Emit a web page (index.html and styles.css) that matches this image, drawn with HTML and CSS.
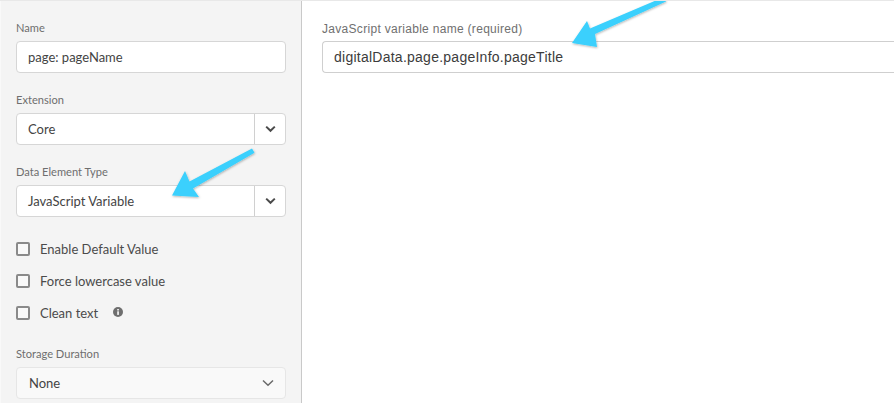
FILE: index.html
```html
<!DOCTYPE html>
<html lang="en">
<head>
<meta charset="utf-8">
<title>Data Element</title>
<link rel="stylesheet" href="styles.css">
</head>
<body>
<div class="page">
  <aside class="sidebar">
    <div class="field">
      <div class="label">Name</div>
      <div class="control"><span class="value">page: pageName</span></div>
    </div>
    <div class="field">
      <div class="label">Extension</div>
      <div class="control">
        <span class="value">Core</span>
        <span class="drop"><svg class="chev" width="11" height="8" viewBox="0 0 11 8"><path d="M1.2 1.6 5.5 5.8 9.8 1.6" fill="none" stroke="#4b4b4b" stroke-width="2"/></svg></span>
      </div>
    </div>
    <div class="field">
      <div class="label">Data Element Type</div>
      <div class="control">
        <span class="value">JavaScript Variable</span>
        <span class="drop"><svg class="chev" width="11" height="8" viewBox="0 0 11 8"><path d="M1.2 1.6 5.5 5.8 9.8 1.6" fill="none" stroke="#4b4b4b" stroke-width="2"/></svg></span>
      </div>
    </div>
    <div class="checks">
      <div class="check"><span class="box"></span><span>Enable Default Value</span></div>
      <div class="check"><span class="box"></span><span>Force lowercase value</span></div>
      <div class="check"><span class="box"></span><span>Clean text</span>
        <svg class="info" width="10" height="10" viewBox="0 0 10 10"><circle cx="5" cy="5" r="5" fill="#6e6e6e"/><rect x="4.2" y="4.3" width="1.7" height="3.6" fill="#f4f4f4"/><rect x="4.2" y="2" width="1.7" height="1.5" fill="#f4f4f4"/></svg>
      </div>
    </div>
    <div class="field">
      <div class="label">Storage Duration</div>
      <div class="control quiet">
        <span class="value">None</span>
        <svg class="chev-plain" width="12" height="8" viewBox="0 0 12 8"><path d="M1 1.5 6 6.3 11 1.5" fill="none" stroke="#6a6a6a" stroke-width="1.5"/></svg>
      </div>
    </div>
  </aside>
  <main class="main">
    <div class="label js">JavaScript variable name (required)</div>
    <div class="control js-input"><span class="value">digitalData.page.pageInfo.pageTitle</span></div>
  </main>
  <svg class="arrows" width="894" height="403" viewBox="0 0 894 403">
    <defs>
      <filter id="sh" x="-20%" y="-20%" width="140%" height="140%"><feDropShadow dx="0.5" dy="1" stdDeviation="1" flood-color="#000" flood-opacity="0.3"/></filter>
    </defs>
    <g filter="url(#sh)" fill="#3ad0fd">
      <path d="M252 148.500 254.500 152.800 193 188.500 199 197 172 195.500 185 171 189.500 181.500Z"/>
      <path d="M664 -3 666 1.500 595 34 597 47 572 43 587 21 590 28.500Z"/>
    </g>
  </svg>
</div>
</body>
</html>
```
FILE: styles.css
```css
* { box-sizing: border-box; }
html, body { margin: 0; padding: 0; }
body { background: #fff; overflow: hidden; }
.page {
  position: relative;
  display: flex;
  width: 894px;
  height: 403px;
  overflow: hidden;
  border-top: 1px solid #e8e8e8;
  font-family: Lato, "Open Sans", sans-serif;
  color: #4b4b4b;
}
.sidebar {
  flex: 0 0 302px;
  height: 402px;
  padding: 20px 15px 0 15px;
  background: #f4f4f4;
  border-right: 1px solid #c9c9c9;
  border-left: 1px solid #f9f9f9;
}
.field { margin-bottom: 20px; }
.label {
  font-size: 11.1px;
  line-height: 14px;
  height: 16px;
  margin-bottom: 4px;
  color: #6e6e6e;
}
.control {
  display: flex;
  align-items: center;
  height: 32px;
  background: #fff;
  border: 1px solid #d6d6d6;
  border-radius: 4px;
  font-size: 13px;
  color: #444;
}
.control .value { flex: 1; padding-left: 11px; }
.drop {
  flex: 0 0 31px;
  height: 100%;
  display: flex;
  align-items: center;
  justify-content: center;
  border-left: 1px solid #d0d0d0;
}
.checks {
  display: flex;
  flex-direction: column;
  gap: 10px;
  margin-top: 21px;
  margin-bottom: 23px;
}
.check {
  display: flex;
  align-items: center;
  height: 22px;
  font-size: 13px;
  color: #4b4b4b;
}
.box {
  width: 14px;
  height: 14px;
  margin-right: 10px;
  border: 2px solid #8a8a8a;
  border-radius: 2px;
  background: #f9f9f9;
}
.info { margin-left: 15px; margin-top: -2px; }
.quiet { background: #f9f9f9; border-color: #e6e6e6; padding-right: 11px; }
.quiet .value { padding-left: 12px; }
.main { flex: 1; padding: 20px 0 0 20px; font-family: "Liberation Sans", Arial, sans-serif; }
.js { font-size: 12px; line-height: 16px; letter-spacing: 0.3px; margin-bottom: 4px; color: #707070; }
.js-input {
  width: 600px;
  font-size: 14px;
  letter-spacing: 0.25px;
  border-color: #cfcfcf;
  border-right: 0;
  border-radius: 4px 0 0 4px;
  color: #3c3c3c;
}
.arrows { position: absolute; left: 0; top: -1px; pointer-events: none; }
```
